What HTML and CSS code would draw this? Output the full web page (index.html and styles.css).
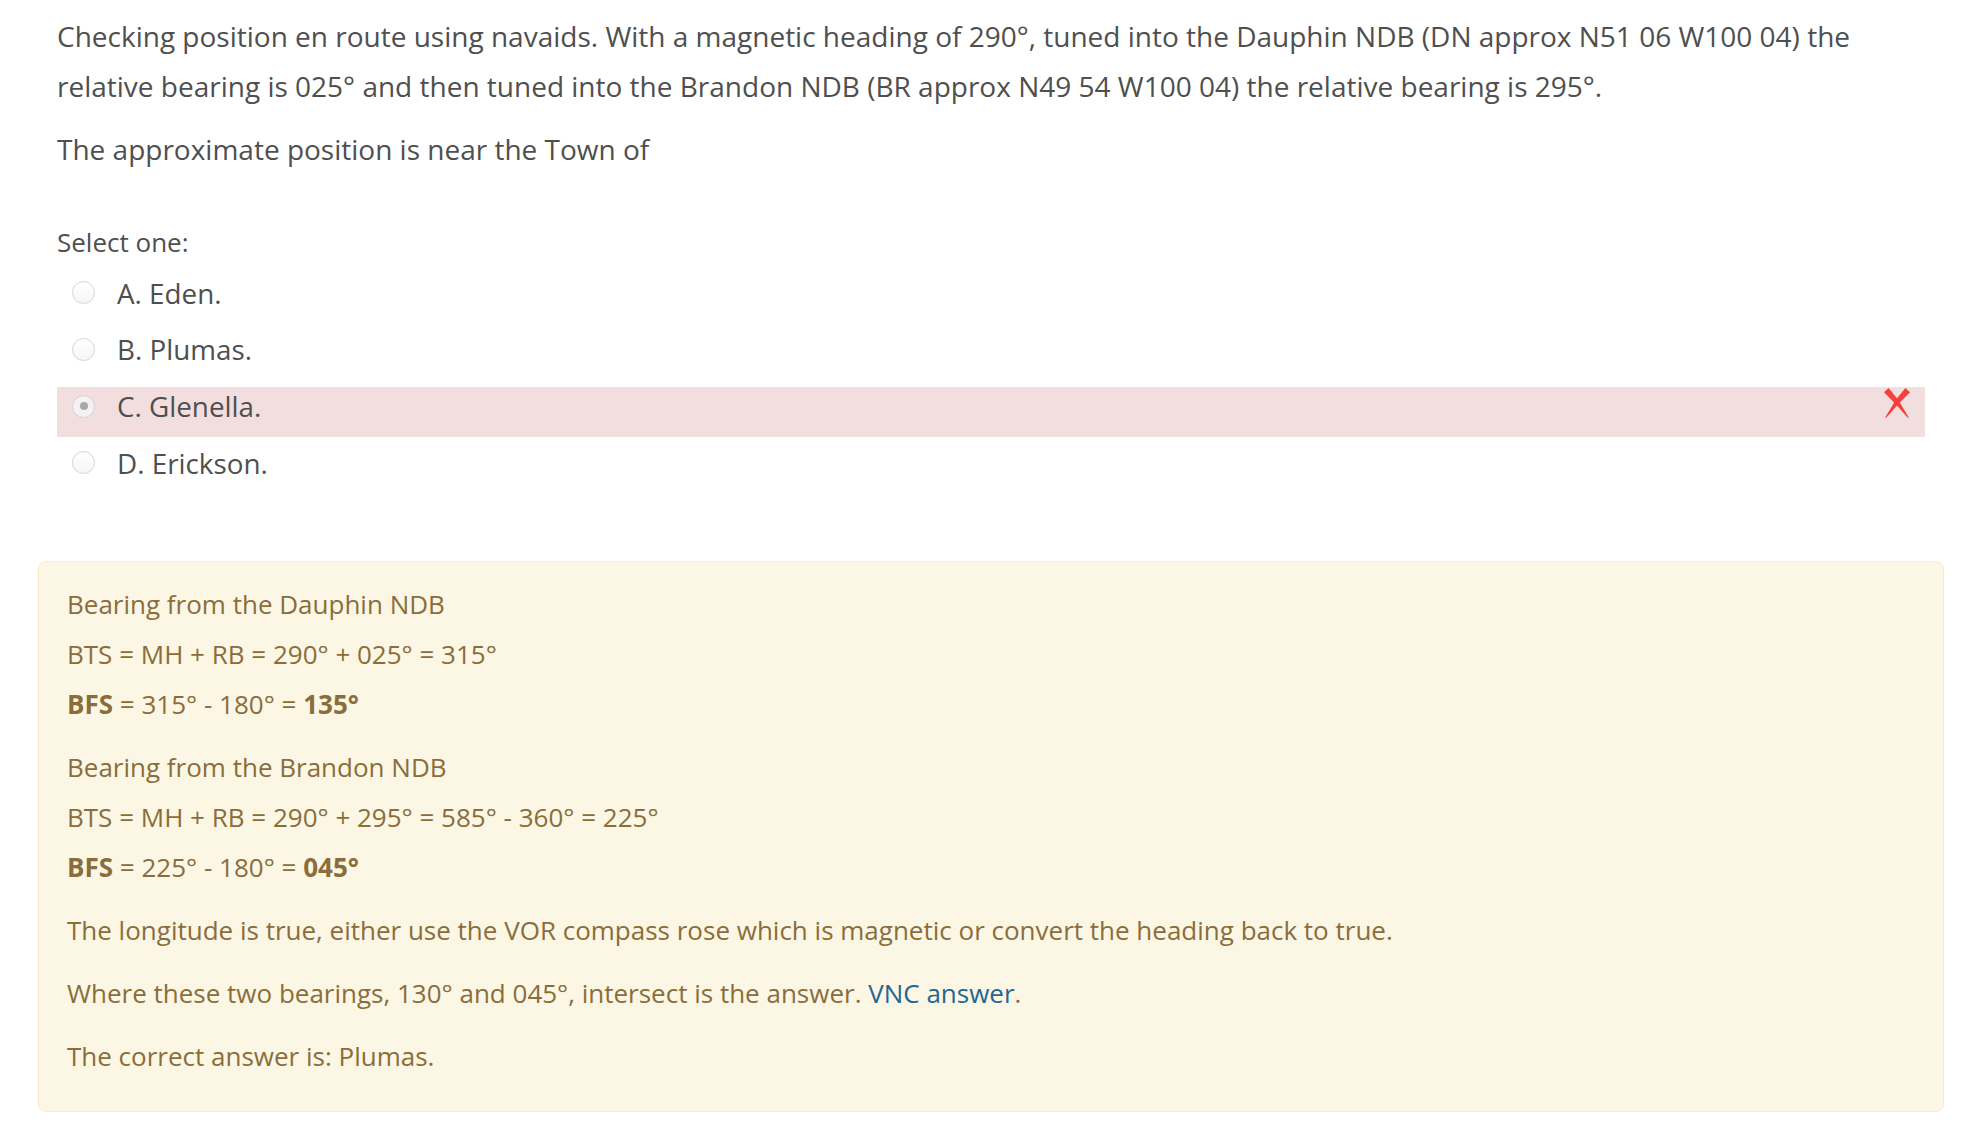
FILE: index.html
```html
<!DOCTYPE html>
<html lang="en">
<head>
<meta charset="utf-8">
<title>Question</title>
<link rel="stylesheet" href="styles.css">
</head>
<body>
<div class="page">
  <div class="formulation">
    <div class="qtext">
      <p>Checking position en route using navaids. With a magnetic heading of 290°, tuned into the Dauphin NDB (DN approx N51 06 W100 04) the relative bearing is 025° and then tuned into the Brandon NDB (BR approx N49 54 W100 04) the relative bearing is 295°.</p>
      <p>The approximate position is near the Town of</p>
    </div>
    <div class="ablock">
      <div class="prompt">Select one:</div>
      <div class="answer">
        <div class="option"><span class="radio"></span><span class="label">A. Eden.</span></div>
        <div class="option"><span class="radio"></span><span class="label">B. Plumas.</span></div>
        <div class="option incorrect"><span class="radio checked"></span><span class="label">C. Glenella.</span>
          <svg class="cross" width="26" height="30" viewBox="0 0 26 30" aria-hidden="true">
            <polygon points="0,4.2 4.6,0 14,11.5 24.8,29.6 23.8,29.8 11.5,16" fill="#f5403b"/>
            <polygon points="26,4.2 21.4,0 12,11.5 1.2,29.6 2.2,29.8 14.5,16" fill="#f5403b"/>
          </svg>
        </div>
        <div class="option"><span class="radio"></span><span class="label">D. Erickson.</span></div>
      </div>
    </div>
  </div>
  <div class="outcome">
    <p>Bearing from the Dauphin NDB<br>BTS = MH + RB = 290° + 025° = 315°<br><strong>BFS</strong> = 315° - 180° = <strong>135°</strong></p>
    <p>Bearing from the Brandon NDB<br>BTS = MH + RB = 290° + 295° = 585° - 360° = 225°<br><strong>BFS</strong> = 225° - 180° = <strong>045°</strong></p>
    <p>The longitude is true, either use the VOR compass rose which is magnetic or convert the heading back to true.</p>
    <p>Where these two bearings, 130° and 045°, intersect is the answer. <a href="#" class="link">VNC answer</a>.</p>
    <p>The correct answer is: Plumas.</p>
  </div>
</div>
</body>
</html>
```

FILE: styles.css
```css
html, body {
  margin: 0;
  padding: 0;
  background: #ffffff;
}

body {
  font-family: "Open Sans", "Liberation Sans", sans-serif;
  color: #4f4f4f;
}

.page {
  padding: 11px 22px 0 38px;
}

.formulation {
  padding: 0 19px;
}

.qtext p {
  margin: 0 0 13px 0;
  font-size: 28px;
  line-height: 50px;
}

.ablock {
  margin-top: 43px;
}

.prompt {
  font-size: 26px;
  line-height: 50px;
  margin-bottom: 6.5px;
}

.answer {
  display: flex;
  flex-direction: column;
  gap: 6.8px;
}

.option {
  position: relative;
  display: flex;
  align-items: flex-start;
  height: 50px;
  box-sizing: border-box;
  padding: 4px 0 0 15px;
  font-size: 27.8px;
  line-height: 30px;
}

.option.incorrect {
  background: #f2dede;
}

.radio {
  flex: none;
  width: 23px;
  height: 23px;
  margin-top: 3.5px;
  margin-right: 22px;
  box-sizing: border-box;
  border: 1px solid #d6d6d6;
  border-radius: 50%;
  background: linear-gradient(#ffffff, #f6f6f6);
  display: flex;
  align-items: center;
  justify-content: center;
}

.radio.checked {
  background: #f3f1f1;
  border-color: #d6d2d2;
}

.radio.checked::after {
  content: "";
  width: 8px;
  height: 8px;
  border-radius: 50%;
  background: #a9a7a7;
}

.cross {
  position: absolute;
  right: 15px;
  top: 0.5px;
}

.outcome {
  margin-top: 67px;
  border: 1px solid #faebcc;
  border-radius: 8px;
  background: #fcf7e4;
  color: #8a6d3b;
  padding: 17px 28px 17px 28px;
}

.outcome p {
  margin: 0 0 13px 0;
  font-size: 26px;
  line-height: 50px;
}

.outcome strong {
  font-weight: 700;
}

.link {
  color: #236792;
  text-decoration: none;
}
```
